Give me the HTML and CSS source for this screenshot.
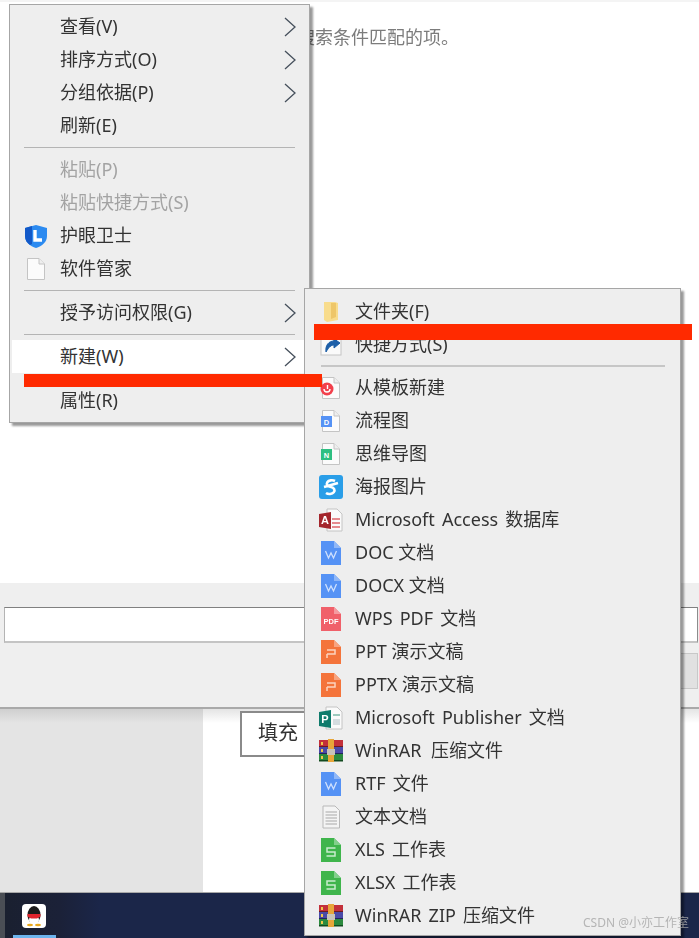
FILE: index.html
```html
<!DOCTYPE html>
<html lang="zh">
<head>
    <meta charset="utf-8">
    <title>新建</title>
    <link rel="stylesheet" href="styles.css">
</head>
<body>
    <svg class="defs" aria-hidden="true">
        <symbol id="chevron" viewBox="0 0 12 20">
            <polyline points="1,1 11,10 1,19" fill="none" stroke="#46505c" stroke-width="1.3"/>
        </symbol>
        <symbol id="page" viewBox="0 0 24 24">
            <path d="M3.5 1.5H15L20.5 7V22.5H3.5Z" fill="#fbfbfb" stroke="#c4c4c4"/>
            <path d="M15 1.5V7H20.5" fill="#eee" stroke="#c4c4c4"/>
        </symbol>
        <symbol id="wps-word" viewBox="0 0 24 24">
            <path d="M2 0H15L22 7V24H2Z" fill="#5592f5"/>
            <path d="M15 0V7H22Z" fill="#8fb7f8"/>
            <polyline points="6.500,10 9.500,17 12,12 14.500,17 17.500,10" fill="none" stroke="#cfe0fd" stroke-width="1.3"/>
        </symbol>
        <symbol id="wps-ppt" viewBox="0 0 24 24">
            <path d="M2 0H15L22 7V24H2Z" fill="#f4743b"/>
            <path d="M15 0V7H22Z" fill="#f8a480"/>
            <path d="M8 10H16V14H8M8 14V18" fill="none" stroke="#fbd3c0" stroke-width="1.5"/>
        </symbol>
        <symbol id="wps-xls" viewBox="0 0 24 24">
            <path d="M2 0H15L22 7V24H2Z" fill="#3fb54c"/>
            <path d="M15 0V7H22Z" fill="#82d08b"/>
            <path d="M16.5 10H8V14H16V18H7.5" fill="none" stroke="#c9ecce" stroke-width="1.5"/>
        </symbol>
        <symbol id="winrar" viewBox="0 0 24 24">
            <rect x="0" y="1" width="24" height="7" fill="#c3303a"/>
            <rect x="0" y="8" width="24" height="7" fill="#4a4aa8"/>
            <rect x="0" y="15" width="24" height="7" fill="#2c8a3e"/>
            <rect x="0" y="7" width="24" height="1" fill="#6d1a20"/>
            <rect x="0" y="14" width="24" height="1" fill="#23235e"/>
            <rect x="0" y="21" width="24" height="1.5" fill="#124a1f"/>
            <rect x="2" y="3" width="2" height="3" fill="#f1c84a"/>
            <rect x="2" y="10" width="2" height="3" fill="#f1c84a"/>
            <rect x="2" y="17" width="2" height="3" fill="#f1c84a"/>
            <rect x="9" y="0" width="6" height="23" fill="#e8a63a"/>
            <rect x="8" y="10" width="8" height="6" fill="#c9c4b8"/>
        </symbol>
    </svg>

    <div class="screen">
        <div class="results">
            <p class="empty">未找到与搜索条件匹配的项。</p>
        </div>
        <div class="panel">
            <div class="path-input"></div>
            <div class="panel-actions"><div class="ok-button"></div></div>
        </div>
        <div class="lower">
            <div class="side"></div>
            <div class="content"><div class="fill-button">填充</div></div>
        </div>
        <div class="taskbar">
            <div class="qq">
                <svg width="24" height="24" viewBox="0 0 24 24">
                    <rect width="24" height="24" rx="4" fill="#fff"/>
                    <ellipse cx="12" cy="11" rx="6.5" ry="9" fill="#1b1b1b"/>
                    <ellipse cx="12" cy="16" rx="5" ry="4.8" fill="#fff"/>
                    <path d="M5.5 10H18.500V12.500L15 14.500H9L5.500 12.500Z" fill="#e0242c"/>
                    <ellipse cx="8" cy="21" rx="3" ry="1.2" fill="#eba91e"/>
                    <ellipse cx="16" cy="21" rx="3" ry="1.2" fill="#eba91e"/>
                </svg>
            </div>
            <div class="running"></div>
        </div>

        <div class="menu menu-main">
            <div class="item"><span class="slot"></span><span>查看(V)</span><svg class="arrow"><use href="#chevron"/></svg></div>
            <div class="item"><span class="slot"></span><span>排序方式(O)</span><svg class="arrow"><use href="#chevron"/></svg></div>
            <div class="item"><span class="slot"></span><span>分组依据(P)</span><svg class="arrow"><use href="#chevron"/></svg></div>
            <div class="item"><span class="slot"></span><span>刷新(E)</span></div>
            <div class="sep"></div>
            <div class="item off"><span class="slot"></span><span>粘贴(P)</span></div>
            <div class="item off"><span class="slot"></span><span>粘贴快捷方式(S)</span></div>
            <div class="item">
                <svg class="slot" viewBox="0 0 24 24">
                    <path d="M12 1L23 4V12C23 18 18 22 12 24C6 22 1 18 1 12V4Z" fill="#2b8af0"/>
                    <path d="M1 4L8 2V20L6 21C3 19 1 16 1 12Z" fill="#1259c8"/>
                    <path d="M11 6V16H18" fill="none" stroke="#fff" stroke-width="3.4"/>
                </svg>
                <span>护眼卫士</span>
            </div>
            <div class="item"><svg class="slot"><use href="#page"/></svg><span>软件管家</span></div>
            <div class="sep"></div>
            <div class="item"><span class="slot"></span><span>授予访问权限(G)</span><svg class="arrow"><use href="#chevron"/></svg></div>
            <div class="sep"></div>
            <div class="item hot"><span class="slot"></span><span>新建(W)</span><svg class="arrow"><use href="#chevron"/></svg></div>
            <div class="sep"></div>
            <div class="item"><span class="slot"></span><span>属性(R)</span></div>
        </div>

        <div class="menu menu-new">
            <div class="item">
                <svg class="slot" viewBox="0 0 24 24">
                    <path d="M5 2H16L19 3V20L8 22L5 20Z" fill="#f8dc8c"/>
                    <path d="M12 3H17V17L12 19Z" fill="#eec668"/>
                </svg>
                <span>文件夹(F)</span>
            </div>
            <div class="item">
                <svg class="slot" viewBox="0 0 24 24">
                    <rect x="2" y="3" width="20" height="19" fill="#fafafa" stroke="#c4c4c4"/>
                    <path d="M7 19C6 12 10 8 15 8L14 5L21 10L15 15V12C12 12 10 14 7 19Z" fill="#1d5fa8" stroke="#1d5fa8"/>
                </svg>
                <span>快捷方式(S)</span>
            </div>
            <div class="sep"></div>
            <div class="item">
                <svg class="slot" viewBox="0 0 24 24">
                    <use href="#page"/>
                    <circle cx="8" cy="13" r="6.5" fill="#f2404c"/>
                    <path d="M5 13A3 3 0 0 0 11 13M8.5 9V13" fill="none" stroke="#fff" stroke-width="1.4"/>
                </svg>
                <span>从模板新建</span>
            </div>
            <div class="item">
                <svg class="slot" viewBox="0 0 24 24">
                    <use href="#page"/>
                    <rect x="2" y="7" width="11" height="11" fill="#5592f5"/>
                    <text x="7.5" y="15.5" class="tiny" text-anchor="middle">D</text>
                </svg>
                <span>流程图</span>
            </div>
            <div class="item">
                <svg class="slot" viewBox="0 0 24 24">
                    <use href="#page"/>
                    <rect x="2" y="7" width="11" height="11" fill="#2fbf82"/>
                    <text x="7.5" y="15.5" class="tiny" text-anchor="middle">N</text>
                </svg>
                <span>思维导图</span>
            </div>
            <div class="item">
                <svg class="slot" viewBox="0 0 24 24">
                    <rect width="24" height="24" rx="3" fill="#2a9ee8"/>
                    <path d="M16 6A5 3.4 0 1 0 12 12A5 3.6 0 1 1 7 18M5 12L19 8" fill="none" stroke="#fff" stroke-width="2.6"/>
                </svg>
                <span>海报图片</span>
            </div>
            <div class="item">
                <svg class="slot" viewBox="0 0 24 24">
                    <path d="M8 1H18L23 6V23H8Z" fill="#fafafa" stroke="#c4c4c4"/>
                    <rect x="13" y="10" width="8" height="2" fill="#e58a8e"/>
                    <rect x="13" y="14" width="8" height="2" fill="#e58a8e"/>
                    <rect x="13" y="18" width="8" height="2" fill="#e58a8e"/>
                    <path d="M0 6L12 4V21L0 19Z" fill="#a4262c"/>
                    <text x="6" y="16" class="tiny tiny-big" text-anchor="middle">A</text>
                </svg>
                <span class="wide">Microsoft Access 数据库</span>
            </div>
            <div class="item"><svg class="slot"><use href="#wps-word"/></svg><span>DOC 文档</span></div>
            <div class="item"><svg class="slot"><use href="#wps-word"/></svg><span>DOCX 文档</span></div>
            <div class="item">
                <svg class="slot" viewBox="0 0 24 24">
                    <path d="M2 0H15L22 7V24H2Z" fill="#f0606a"/>
                    <path d="M15 0V7H22Z" fill="#f59aa0"/>
                    <text x="12" y="17" class="tiny" text-anchor="middle">PDF</text>
                </svg>
                <span class="wide">WPS PDF 文档</span>
            </div>
            <div class="item"><svg class="slot"><use href="#wps-ppt"/></svg><span>PPT 演示文稿</span></div>
            <div class="item"><svg class="slot"><use href="#wps-ppt"/></svg><span>PPTX 演示文稿</span></div>
            <div class="item">
                <svg class="slot" viewBox="0 0 24 24">
                    <path d="M7 1H18L23 6V23H7Z" fill="#fafafa" stroke="#c4c4c4"/>
                    <rect x="14" y="8" width="7" height="2" fill="#9cc9bd"/>
                    <rect x="14" y="13" width="7" height="6" fill="#d5dde0"/>
                    <path d="M0 6L12 4V22L0 20Z" fill="#0f7b6c"/>
                    <text x="6" y="17" class="tiny tiny-big" text-anchor="middle">P</text>
                </svg>
                <span class="wide">Microsoft Publisher 文档</span>
            </div>
            <div class="item"><svg class="slot"><use href="#winrar"/></svg><span class="wider">WinRAR 压缩文件</span></div>
            <div class="item"><svg class="slot"><use href="#wps-word"/></svg><span class="wide">RTF 文件</span></div>
            <div class="item">
                <svg class="slot" viewBox="0 0 24 24">
                    <path d="M4 1H16L20.500 5.500V23H4Z" fill="#f4f4f4" stroke="#b8b8b8"/>
                    <path d="M6.500 7H18M6.500 10H18M6.500 13H18M6.500 16H18M6.500 19H18" stroke="#a8a8a8"/>
                </svg>
                <span>文本文档</span>
            </div>
            <div class="item"><svg class="slot"><use href="#wps-xls"/></svg><span class="wide">XLS 工作表</span></div>
            <div class="item"><svg class="slot"><use href="#wps-xls"/></svg><span class="wide">XLSX 工作表</span></div>
            <div class="item"><svg class="slot"><use href="#winrar"/></svg><span class="wide">WinRAR ZIP 压缩文件</span></div>
        </div>

        <!-- red marks drawn over the screenshot -->
        <div class="mark mark-folder"></div>
        <div class="mark mark-new"></div>

        <div class="watermark">CSDN @小亦工作室</div>
    </div>
</body>
</html>
```

FILE: styles.css
```css
* {
    box-sizing: border-box;
}

html, body {
    margin: 0;
    background: #fff;
}

.defs {
    position: absolute;
    width: 0;
    height: 0;
}

.screen {
    position: relative;
    display: flex;
    flex-direction: column;
    width: 699px;
    height: 938px;
    overflow: hidden;
    font-family: "Noto Sans", "Noto Sans CJK SC", sans-serif;
    font-size: 18px;
    color: #333;
    filter: blur(0.6px);
}

.results {
    height: 583px;
    padding: 24px 0 0 225px;
    border-top: 2px solid #f4f4f4;
}

.empty {
    margin: 0;
    font-size: 18px;
    line-height: 22px;
    color: #7c7c7c;
}

.panel {
    display: flex;
    flex-direction: column;
    height: 126px;
    padding: 24px 1px 0 4px;
    background: #efefef;
    border-bottom: 2px solid #a9a9a9;
}

.path-input {
    height: 36px;
    background: #fff;
    border: 1px solid #b4b4b4;
    border-top-color: #808080;
    border-right-color: #8c8c8c;
    border-bottom: 2px solid #c4c4c4;
}

.panel-actions {
    display: flex;
    justify-content: flex-end;
    margin-top: 10px;
}

.ok-button {
    width: 140px;
    height: 36px;
    background: #e1e1e1;
    border: 1px solid #c8c8c8;
}

.lower {
    display: flex;
    flex: 1;
}

.side {
    width: 203px;
    background: linear-gradient(#cfcfcf, #e4e4e4 14px);
}

.content {
    flex: 1;
    padding: 2px 0 0 37px;
    background: linear-gradient(#e4e4e4, #fff 14px);
}

.fill-button {
    width: 200px;
    height: 46px;
    padding-left: 16px;
    font-size: 20px;
    line-height: 40px;
    background: #fff;
    border: 2px solid #8a8a8a;
}

.taskbar {
    position: relative;
    height: 46px;
    padding: 11px 0 0 22px;
    background: linear-gradient(90deg, #4a4e55 5px, #1a2030 5px, #1b2138 60px, #1b2649 100px);
    border-top: 1px solid #a8a8a8;
}

.qq {
    display: flex;
    width: 24px;
    height: 24px;
}

.running {
    position: absolute;
    left: 13px;
    bottom: 0;
    width: 43px;
    height: 3px;
    background: #6cb4ee;
}

/* context menus */
.menu {
    position: absolute;
    display: flex;
    flex-direction: column;
    padding: 5px 2px;
    background: #eee;
    border: 1px solid #a6a6a6;
    box-shadow: 3px 3px 2px rgba(0, 0, 0, .4);
}

.menu-main {
    left: 9px;
    top: 4px;
    width: 301px;
}

.menu-new {
    left: 304px;
    top: 288px;
    width: 377px;
    padding-top: 6px;
    padding-bottom: 3px;
}

.item {
    display: flex;
    align-items: center;
    gap: 12px;
    height: 33px;
    padding: 0 11px 0 12px;
    line-height: 33px;
    white-space: nowrap;
}

.item.off {
    color: #a3a3a3;
}

.item.hot {
    background: #fff;
}

.wide {
    word-spacing: 2.5px;
}

.wider {
    word-spacing: 5px;
}

.slot {
    flex: none;
    width: 24px;
    height: 24px;
}

.arrow {
    flex: none;
    width: 12px;
    height: 20px;
    margin-left: auto;
}

.sep {
    height: 1px;
    margin: 5px 12px;
    background: #b4b4b4;
}

.menu-new .sep {
    height: 2px;
    margin: 4px 13px 4px 14px;
    background: #c6c6c6;
}

.tiny {
    font-family: "Liberation Sans", sans-serif;
    font-size: 7.5px;
    font-weight: bold;
    fill: #fff;
}

.tiny-big {
    font-size: 11px;
}

.mark {
    position: absolute;
    background: #ff2a00;
}

.mark-folder {
    left: 314px;
    top: 324px;
    width: 378px;
    height: 16px;
}

.mark-new {
    left: 24px;
    top: 374px;
    width: 298px;
    height: 13px;
}

.watermark {
    position: absolute;
    left: 583px;
    top: 914px;
    font-size: 12px;
    line-height: 18px;
    color: rgba(170, 170, 170, .85);
    white-space: nowrap;
}
```
